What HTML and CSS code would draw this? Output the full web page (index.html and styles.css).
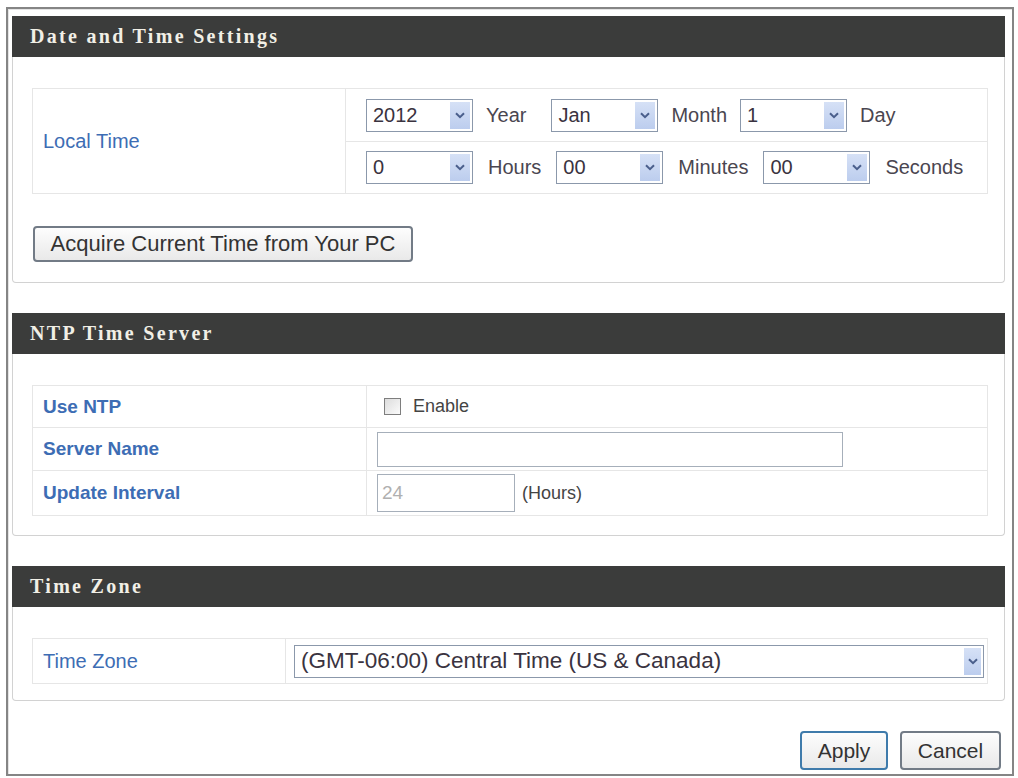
FILE: index.html
```html
<!DOCTYPE html>
<html lang="en">
<head>
    <meta charset="UTF-8">
    <meta name="viewport" content="width=device-width, initial-scale=1.0">
    <title>Date and Time Settings</title>
    <link rel="stylesheet" href="styles.css">
</head>
<body>
    <div class="frame">
        <section class="panel">
            <h2 class="panel-title">Date and Time Settings</h2>
            <div class="panel-body panel-local">
                <table class="grid grid-local">
                    <tr class="row-a">
                        <td class="label" rowspan="2">Local Time</td>
                        <td class="field">
                            <div class="pickers pickers-date">
                                <span class="select"><span class="value">2012</span><span class="arrow"><svg width="10" height="7" viewBox="0 0 10 7"><path d="M1 1.2 L5 5.2 L9 1.2" fill="none" stroke="#4a5f8c" stroke-width="2"/></svg></span></span>
                                <span class="unit unit-year">Year</span>
                                <span class="select"><span class="value">Jan</span><span class="arrow"><svg width="10" height="7" viewBox="0 0 10 7"><path d="M1 1.2 L5 5.2 L9 1.2" fill="none" stroke="#4a5f8c" stroke-width="2"/></svg></span></span>
                                <span class="unit">Month</span>
                                <span class="select"><span class="value">1</span><span class="arrow"><svg width="10" height="7" viewBox="0 0 10 7"><path d="M1 1.2 L5 5.2 L9 1.2" fill="none" stroke="#4a5f8c" stroke-width="2"/></svg></span></span>
                                <span class="unit">Day</span>
                            </div>
                        </td>
                    </tr>
                    <tr class="row-b">
                        <td class="field">
                            <div class="pickers pickers-time">
                                <span class="select"><span class="value">0</span><span class="arrow"><svg width="10" height="7" viewBox="0 0 10 7"><path d="M1 1.2 L5 5.2 L9 1.2" fill="none" stroke="#4a5f8c" stroke-width="2"/></svg></span></span>
                                <span class="unit">Hours</span>
                                <span class="select"><span class="value">00</span><span class="arrow"><svg width="10" height="7" viewBox="0 0 10 7"><path d="M1 1.2 L5 5.2 L9 1.2" fill="none" stroke="#4a5f8c" stroke-width="2"/></svg></span></span>
                                <span class="unit">Minutes</span>
                                <span class="select"><span class="value">00</span><span class="arrow"><svg width="10" height="7" viewBox="0 0 10 7"><path d="M1 1.2 L5 5.2 L9 1.2" fill="none" stroke="#4a5f8c" stroke-width="2"/></svg></span></span>
                                <span class="unit">Seconds</span>
                            </div>
                        </td>
                    </tr>
                </table>
                <button class="btn btn-acquire" type="button">Acquire Current Time from Your PC</button>
            </div>
        </section>

        <section class="panel">
            <h2 class="panel-title">NTP Time Server</h2>
            <div class="panel-body panel-ntp">
                <table class="grid grid-ntp">
                    <tr class="row-ntp">
                        <td class="label label-strong">Use NTP</td>
                        <td class="field">
                            <span class="check"></span><span class="small-text">Enable</span>
                        </td>
                    </tr>
                    <tr class="row-server">
                        <td class="label label-strong">Server Name</td>
                        <td class="field"><span class="input input-wide"></span></td>
                    </tr>
                    <tr class="row-interval">
                        <td class="label label-strong">Update Interval</td>
                        <td class="field">
                            <span class="input input-short">24</span><span class="small-text">(Hours)</span>
                        </td>
                    </tr>
                </table>
            </div>
        </section>

        <section class="panel">
            <h2 class="panel-title">Time Zone</h2>
            <div class="panel-body panel-zone">
                <table class="grid grid-zone">
                    <tr class="row-zone">
                        <td class="label">Time Zone</td>
                        <td class="field">
                            <span class="select select-zone"><span class="value">(GMT-06:00) Central Time (US &amp; Canada)</span><span class="arrow"><svg width="10" height="7" viewBox="0 0 10 7"><path d="M1 1.2 L5 5.2 L9 1.2" fill="none" stroke="#4a5f8c" stroke-width="2"/></svg></span></span>
                        </td>
                    </tr>
                </table>
            </div>
        </section>

        <div class="actions">
            <button class="btn btn-apply" type="button">Apply</button>
            <button class="btn btn-cancel" type="button">Cancel</button>
        </div>
    </div>
</body>
</html>
```

FILE: styles.css
```css
html, body {
    margin: 0;
    background: #fff;
    font-family: 'Liberation Sans', Arial, sans-serif;
    color: #333;
}
.frame {
    box-sizing: border-box;
    height: 769px;
    margin: 7px 4px 2px 6px;
    padding: 7px 7px 0 4px;
    border: 2px solid #858585;
    box-shadow: inset 1px 1px 0 #e4e4e4;
}
.panel {
    border: 1px solid #d2d2d2;
    border-top: none;
    border-radius: 0 0 4px 4px;
    margin-bottom: 30px;
}
.panel-title {
    margin: 0 -1px;
    height: 41px;
    line-height: 41px;
    padding-left: 18px;
    background: #3b3c3b;
    color: #f1efe6;
    font-family: 'Liberation Serif', 'Times New Roman', serif;
    font-size: 20px;
    font-weight: 700;
    letter-spacing: 2.3px;
}
.panel-body {
    padding: 31px 16px 20px 19px;
}
.panel-local {
    padding-bottom: 20px;
}
.panel-ntp {
    padding-bottom: 19px;
}
.panel-zone {
    padding-bottom: 16px;
}
.grid {
    width: 100%;
    border-collapse: collapse;
    border: 1px solid #e2e2e2;
}
.grid td {
    border: 1px solid #e6e6e6;
    padding: 0;
}
.label {
    padding-left: 10px !important;
    color: #3d6db4;
    font-size: 20px;
}
.label-strong {
    font-size: 19px;
    font-weight: 700;
}
.grid-local .label { width: 302px; }
.grid-ntp .label { width: 323px; }
.grid-zone .label { width: 242px; }

.row-a { height: 53px; }
.row-b { height: 52px; }
.row-ntp { height: 42px; }
.row-server { height: 43px; }
.row-interval { height: 45px; }
.row-zone { height: 45px; }

.pickers {
    display: flex;
    align-items: center;
    gap: 13px;
    padding-left: 20px;
}
.pickers-time {
    gap: 15px;
}
.unit {
    font-size: 20px;
    color: #4a4650;
}
.unit-year {
    margin-right: 12px;
}
.select {
    box-sizing: border-box;
    display: inline-flex;
    align-items: center;
    width: 107px;
    height: 33px;
    padding-left: 6px;
    border: 1px solid #8b98ab;
    background: #fff;
    font-size: 20px;
    color: #3a3340;
}
.select .value {
    flex: 1;
    white-space: nowrap;
}
.select .arrow {
    display: flex;
    align-items: center;
    justify-content: center;
    width: 20px;
    height: 27px;
    margin-right: 2px;
    background: linear-gradient(#d6e1f6, #bccdee);
}
.grid-zone .field {
    padding: 0 3px 0 8px;
}
.select-zone {
    width: 100%;
    height: 33px;
    font-size: 22.5px;
}
.select-zone .arrow {
    width: 17px;
}

.grid-ntp .field {
    padding-left: 10px;
}
.check {
    display: inline-block;
    vertical-align: middle;
    width: 15px;
    height: 15px;
    margin: 0 12px 0 7px;
    border: 1px solid #7e7e7e;
    background: linear-gradient(135deg, #dcdcdc, #fbfbfb);
}
.small-text {
    vertical-align: middle;
    font-size: 18px;
    color: #444;
}
.input {
    box-sizing: border-box;
    display: inline-block;
    vertical-align: middle;
    height: 35px;
    border: 1px solid #a6afba;
    background: #fff;
}
.input-wide {
    width: 466px;
}
.input-short {
    width: 138px;
    height: 38px;
    line-height: 36px;
    padding-left: 4px;
    margin-right: 7px;
    font-size: 19px;
    color: #b0b0b0;
}

.btn {
    box-sizing: border-box;
    font-family: 'Liberation Sans', Arial, sans-serif;
    color: #333;
    border: 2px solid #727b86;
    border-radius: 4px;
    background: linear-gradient(#fdfdfd, #e9e9e9);
    padding: 0;
}
.btn-acquire {
    display: block;
    margin-top: 32px;
    margin-left: 1px;
    width: 380px;
    height: 36px;
    font-size: 22px;
}
.actions {
    display: flex;
    justify-content: flex-end;
    gap: 12px;
    margin-top: 6px;
    padding-right: 4px;
}
.btn-apply, .btn-cancel {
    height: 39px;
    font-size: 21px;
}
.btn-apply {
    width: 88px;
    border-color: #3f7bab;
}
.btn-cancel {
    width: 101px;
}
```
